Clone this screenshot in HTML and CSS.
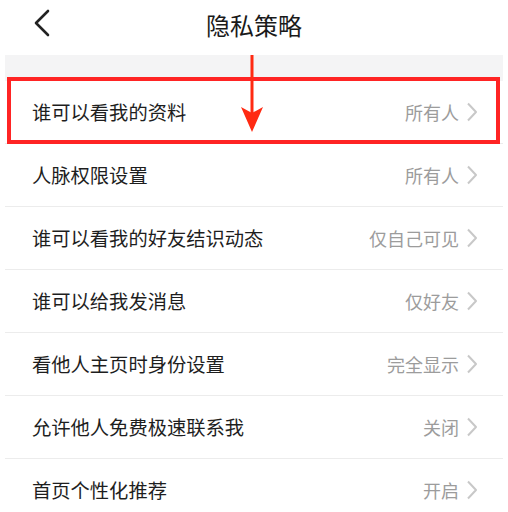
FILE: index.html
```html
<!DOCTYPE html>
<html lang="zh-CN">
<head>
<meta charset="utf-8">
<title>隐私策略</title>
<link rel="stylesheet" href="styles.css">
</head>
<body>
<header class="topbar">
  <svg class="back" width="18" height="28" viewBox="0 0 18 28"><path d="M15 2 L3 14 L15 26" fill="none" stroke="#222" stroke-width="2.6" stroke-linecap="round" stroke-linejoin="round"/></svg>
  <h1 class="title">隐私策略</h1>
</header>
<main class="content">
  <div class="band"></div>
  <ul class="list">
    <li class="row row-first">
      <span class="label">谁可以看我的资料</span>
      <span class="value">所有人<svg class="chev" width="12" height="20" viewBox="0 0 12 20"><path d="M2 1.5 L10 10 L2 18.5" fill="none" stroke="#c8c8c8" stroke-width="2" stroke-linejoin="round"/></svg></span>
      <div class="highlight"></div>
    </li>
    <li class="row">
      <span class="label">人脉权限设置</span>
      <span class="value">所有人<svg class="chev" width="12" height="20" viewBox="0 0 12 20"><path d="M2 1.5 L10 10 L2 18.5" fill="none" stroke="#c8c8c8" stroke-width="2" stroke-linejoin="round"/></svg></span>
    </li>
    <li class="row">
      <span class="label">谁可以看我的好友结识动态</span>
      <span class="value">仅自己可见<svg class="chev" width="12" height="20" viewBox="0 0 12 20"><path d="M2 1.5 L10 10 L2 18.5" fill="none" stroke="#c8c8c8" stroke-width="2" stroke-linejoin="round"/></svg></span>
    </li>
    <li class="row">
      <span class="label">谁可以给我发消息</span>
      <span class="value">仅好友<svg class="chev" width="12" height="20" viewBox="0 0 12 20"><path d="M2 1.5 L10 10 L2 18.5" fill="none" stroke="#c8c8c8" stroke-width="2" stroke-linejoin="round"/></svg></span>
    </li>
    <li class="row">
      <span class="label">看他人主页时身份设置</span>
      <span class="value">完全显示<svg class="chev" width="12" height="20" viewBox="0 0 12 20"><path d="M2 1.5 L10 10 L2 18.5" fill="none" stroke="#c8c8c8" stroke-width="2" stroke-linejoin="round"/></svg></span>
    </li>
    <li class="row">
      <span class="label">允许他人免费极速联系我</span>
      <span class="value">关闭<svg class="chev" width="12" height="20" viewBox="0 0 12 20"><path d="M2 1.5 L10 10 L2 18.5" fill="none" stroke="#c8c8c8" stroke-width="2" stroke-linejoin="round"/></svg></span>
    </li>
    <li class="row">
      <span class="label">首页个性化推荐</span>
      <span class="value">开启<svg class="chev" width="12" height="20" viewBox="0 0 12 20"><path d="M2 1.5 L10 10 L2 18.5" fill="none" stroke="#c8c8c8" stroke-width="2" stroke-linejoin="round"/></svg></span>
    </li>
  </ul>
  <svg class="arrow" width="26" height="78" viewBox="0 0 26 78"><path d="M13 0 V62" stroke="#ff2a12" stroke-width="3"/><path d="M2 52 L13 58 L24 52 L13 77 Z" fill="#ff2a12"/></svg>
</main>
</body>
</html>
```
FILE: styles.css
```css
* { box-sizing: border-box; }
html, body {
  margin: 0;
  padding: 0;
  background: #fff;
  font-family: "Noto Sans CJK SC", "Noto Sans", sans-serif;
}
.topbar {
  position: relative;
  height: 55px;
  display: flex;
  align-items: center;
  justify-content: center;
}
.back {
  position: absolute;
  left: 33px;
  top: 9px;
}
.title {
  margin: 0;
  font-size: 24px;
  font-weight: 400;
  color: #1a1a1a;
  line-height: 1;
  margin-top: -5px;
}
.content {
  position: relative;
  padding: 0 5px;
}
.band {
  height: 26px;
  background: #f4f4f5;
}
.list {
  list-style: none;
  margin: 0;
  padding: 0;
}
.row {
  position: relative;
  height: 63px;
  display: flex;
  align-items: center;
  justify-content: space-between;
  border-bottom: 1px solid #ececec;
  padding: 0 25px 0 27px;
}
.label {
  font-size: 19.3px;
  color: #1e1e1e;
}
.value {
  display: flex;
  align-items: center;
  font-size: 18px;
  color: #9c9c9c;
}
.chev {
  margin-left: 7px;
}
.highlight {
  position: absolute;
  left: 2px;
  right: 3px;
  top: -4px;
  bottom: -1px;
  border: 4.5px solid #ff2424;
}
.arrow {
  position: absolute;
  left: 239px;
  top: 0;
}
```
